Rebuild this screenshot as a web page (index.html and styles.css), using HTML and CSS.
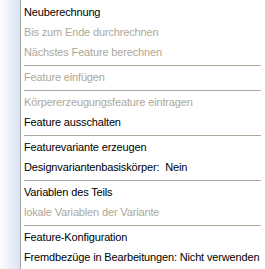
FILE: index.html
```html
<!DOCTYPE html>
<html lang="de">
<head>
<meta charset="utf-8">
<link rel="stylesheet" href="styles.css">
</head>
<body>
<div class="menu">
  <div class="item">Neuberechnung</div>
  <div class="item off">Bis zum Ende durchrechnen</div>
  <div class="item off">Nächstes Feature berechnen</div>
  <div class="sep"></div>
  <div class="item off">Feature einfügen</div>
  <div class="sep"></div>
  <div class="item off">Körpererzeugungsfeature eintragen</div>
  <div class="item">Feature ausschalten</div>
  <div class="sep"></div>
  <div class="item">Featurevariante erzeugen</div>
  <div class="item">Designvariantenbasiskörper:&nbsp; Nein</div>
  <div class="sep"></div>
  <div class="item">Variablen des Teils</div>
  <div class="item off">lokale Variablen der Variante</div>
  <div class="sep"></div>
  <div class="item">Feature-Konfiguration</div>
  <div class="item">Fremdbezüge in Bearbeitungen: Nicht verwenden</div>
</div>
</body>
</html>
```
FILE: styles.css
```css
html, body {
  margin: 0;
  padding: 0;
  background: #ffffff;
}
.menu {
  width: 265px;
  height: 269px;
  padding-top: 2px;
  box-sizing: border-box;
  display: flex;
  flex-direction: column;
  background:
    linear-gradient(to right, #fcfdfe 0, #d9e3f2 20px, #a6a6a8 20px, #a6a6a8 21px, #ffffff 21px);
  font-family: "Liberation Sans", Arial, sans-serif;
  font-size: 11px;
  letter-spacing: -0.15px;
  color: #000000;
  overflow: hidden;
}
.item {
  flex: none;
  height: 20px;
  line-height: 20px;
  padding-left: 24px;
  white-space: nowrap;
}
.item.off {
  color: #aca899;
}
.sep {
  flex: none;
  height: 5px;
  box-sizing: border-box;
  padding: 3px 4px 0 24px;
}
.sep::before {
  content: "";
  display: block;
  height: 1px;
  background: #aca899;
}
```
